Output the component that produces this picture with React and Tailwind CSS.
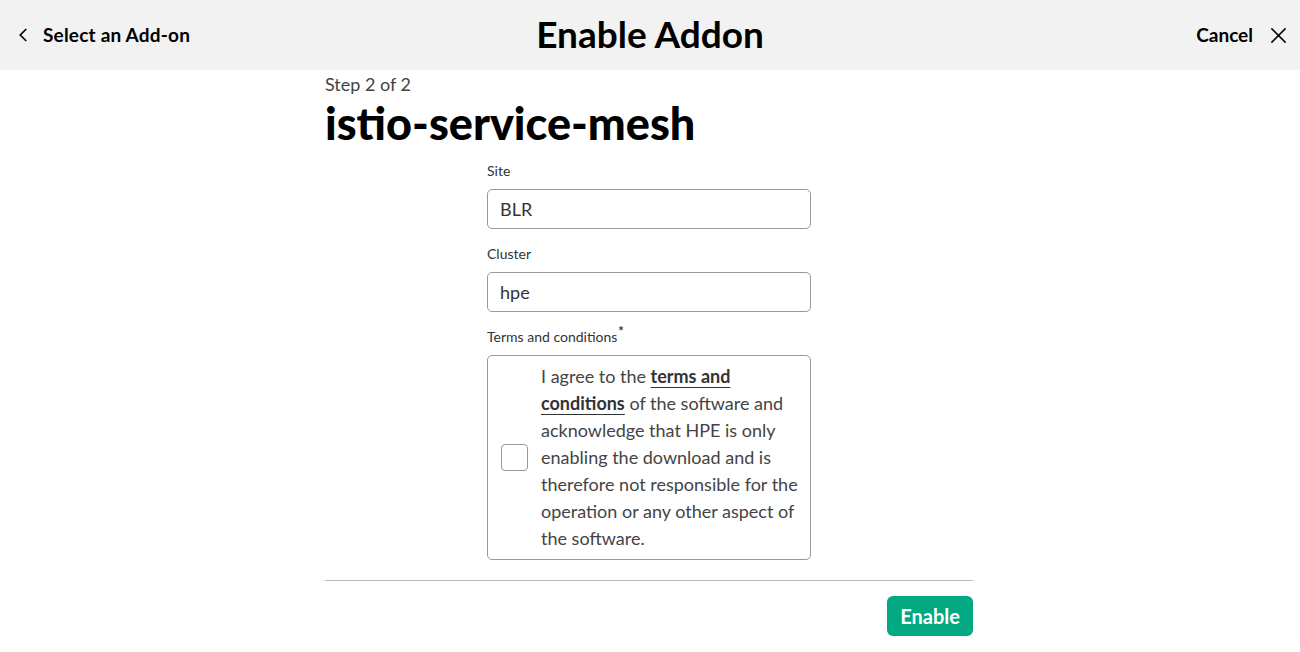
import { useState } from "react"

const font = { fontFamily: "Lato, 'Noto Sans', sans-serif" }

const ChevronLeft = () => (
  <svg viewBox="0 0 24 24" className="w-[18px] h-[18px]" fill="none" stroke="#000" strokeWidth="2.2">
    <polyline points="15,4 7,12 15,20" />
  </svg>
)

const Close = () => (
  <svg viewBox="0 0 24 24" className="w-[19px] h-[19px]" fill="none" stroke="#000" strokeWidth="1.8">
    <line x1="3" y1="3" x2="21" y2="21" />
    <line x1="21" y1="3" x2="3" y2="21" />
  </svg>
)

const Field = ({ label, value }) => (
  <div className="flex flex-col">
    <label className="text-[14px] leading-[20px] text-[#333] mb-[8px]">{label}</label>
    <div className="h-[40px] rounded-[5px] border border-[#999] px-[12px] flex items-center text-[18px] text-[#333]">
      {value}
    </div>
  </div>
)

export default function App() {
  const [checked, setChecked] = useState(false)

  return (
    <div className="w-[1300px] h-[652px] bg-white overflow-hidden" style={font}>
      <header className="h-[70px] bg-[#f2f2f2] flex items-center pl-[15px] pr-[12px]">
        <div className="flex-1 flex items-center gap-[10px] text-[19px] font-bold text-black">
          <ChevronLeft />
          <span className="tracking-[0.2px]">Select an Add-on</span>
        </div>
        <h1 className="text-center text-[37px] font-bold text-black leading-none mt-[-3px] mr-[3px]">Enable Addon</h1>
        <div className="flex-1 flex items-center justify-end gap-[16px] text-[19px] font-bold text-black">
          <span>Cancel</span>
          <Close />
        </div>
      </header>

      <main className="w-[650px] pr-[2px] mx-auto pt-[2px]">
        <div className="text-[18px] leading-[24px] text-[#444]">Step 2 of 2</div>
        <h2 className="text-[45px] leading-[56px] font-black text-black mt-[-1px]">istio-service-mesh</h2>

        <div className="w-[324px] mx-auto mt-[10px] flex flex-col gap-[15px]">
          <Field label="Site" value="BLR" />
          <Field label="Cluster" value="hpe" />
          <div className="flex flex-col">
            <label className="text-[14px] leading-[20px] text-[#333] mb-[8px]">
              Terms and conditions
              <sup className="text-[13px] font-bold ml-[1px]">*</sup>
            </label>
            <div className="rounded-[5px] border border-[#999] pl-[13px] pr-[12px] py-[7px] flex items-center gap-[13px]">
              <button
                onClick={() => setChecked(!checked)}
                className="w-[27px] h-[27px] shrink-0 rounded-[4px] border border-[#999] bg-white"
              />
              <p className="text-[18px] leading-[27px] text-[#444]">
                I agree to the{" "}
                <span className="font-bold underline underline-offset-[4px] text-[#333]">terms and conditions</span> of
                the software and acknowledge that HPE is only enabling the download and is therefore not
                responsible for the operation or any other aspect of the software.
              </p>
            </div>
          </div>
        </div>

        <div className="mt-[20px] border-t border-[#bbb]" />
        <div className="flex justify-end mt-[15px]">
          <button className="h-[40px] px-[13px] rounded-[6px] bg-[#01a982] text-white text-[20px] font-bold">
            Enable
          </button>
        </div>
      </main>
    </div>
  )
}
